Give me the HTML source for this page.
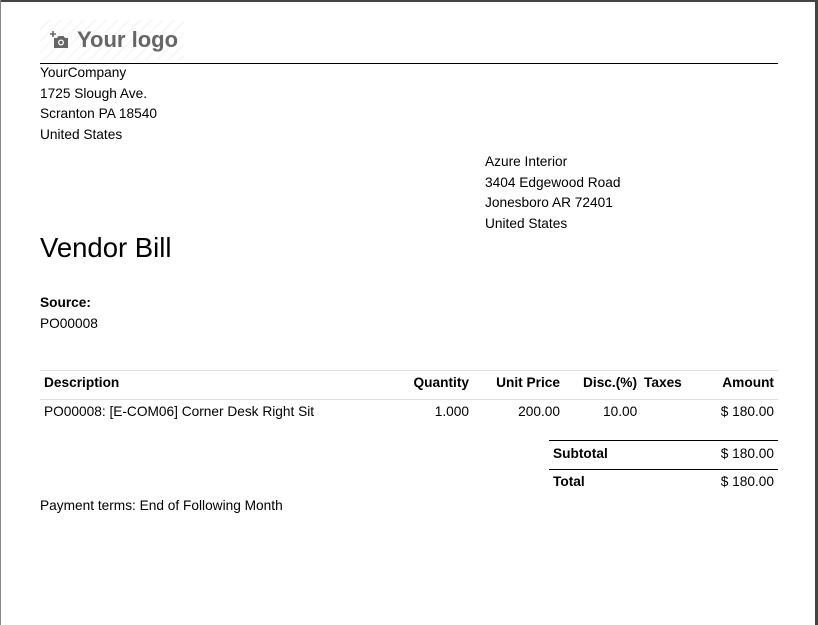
<!DOCTYPE html>
<html><head><meta charset="utf-8"><style>
body{margin:0;width:818px;height:625px;background:#fff;position:relative;overflow:hidden;font-family:"Liberation Sans",Arial,sans-serif;color:#000;font-size:13.7px}
.a{position:absolute;white-space:nowrap}
.b{font-weight:bold}
.r{text-align:right}
</style></head><body>
<div class="a" style="left:0;top:0;width:818px;height:2px;background:#444"></div>
<div class="a" style="left:0;top:0;width:1px;height:625px;background:#888"></div>
<div class="a" style="left:815px;top:0;width:3px;height:625px;background:#444"></div>
<div class="a" style="left:40px;top:20px;width:144px;height:40px;background:repeating-linear-gradient(135deg,#fff 0 6px,#f7f7f7 6px 8px)"></div>
<svg class="a" style="left:50px;top:31px" width="20" height="18" viewBox="0 0 20 18"><path d="M3 0v6M0 3h6" stroke="#666" stroke-width="1.6"/><path d="M4 7h3l1.5-2h5L15 7h3v10H4z" fill="#666"/><circle cx="11" cy="11.5" r="3" fill="#fff"/><circle cx="11" cy="11.5" r="1.7" fill="#666"/></svg>
<div class="a b" style="left:77px;top:27px;font-size:22px;color:#666">Your logo</div>
<div class="a" style="left:40px;top:63px;width:738px;height:1px;background:#000"></div>
<div class="a" style="left:40px;top:63px;line-height:20.5px">YourCompany<br>1725 Slough Ave.<br>Scranton PA 18540<br>United States</div>
<div class="a" style="left:485px;top:152px;line-height:20.5px">Azure Interior<br>3404 Edgewood Road<br>Jonesboro AR 72401<br>United States</div>
<div class="a" style="left:40px;top:232px;font-size:27.5px">Vendor Bill</div>
<div class="a b" style="left:40px;top:295px">Source:</div>
<div class="a" style="left:40px;top:316px">PO00008</div>
<div class="a" style="left:40px;top:370px;width:738px;height:1px;background:#ddd"></div>
<div class="a" style="left:40px;top:399px;width:738px;height:1px;background:#ddd"></div>
<div class="a b" style="left:44px;top:375px">Description</div>
<div class="a b r" style="right:349px;top:375px">Quantity</div>
<div class="a b r" style="right:258px;top:375px">Unit Price</div>
<div class="a b" style="left:583px;top:375px">Disc.(%)</div>
<div class="a b" style="left:644px;top:375px">Taxes</div>
<div class="a b r" style="right:44px;top:375px">Amount</div>
<div class="a" style="left:44px;top:404px">PO00008: [E-COM06] Corner Desk Right Sit</div>
<div class="a r" style="right:349px;top:404px">1.000</div>
<div class="a r" style="right:258px;top:404px">200.00</div>
<div class="a" style="left:603px;top:404px">10.00</div>
<div class="a r" style="right:44px;top:404px">$ 180.00</div>
<div class="a" style="left:549px;top:440px;width:229px;height:1px;background:#000"></div>
<div class="a b" style="left:553px;top:446px">Subtotal</div>
<div class="a r" style="right:44px;top:446px">$ 180.00</div>
<div class="a" style="left:549px;top:469px;width:229px;height:1px;background:#000"></div>
<div class="a b" style="left:553px;top:474px">Total</div>
<div class="a r" style="right:44px;top:474px">$ 180.00</div>
<div class="a" style="left:40px;top:498px">Payment terms: End of Following Month</div>
</body></html>
